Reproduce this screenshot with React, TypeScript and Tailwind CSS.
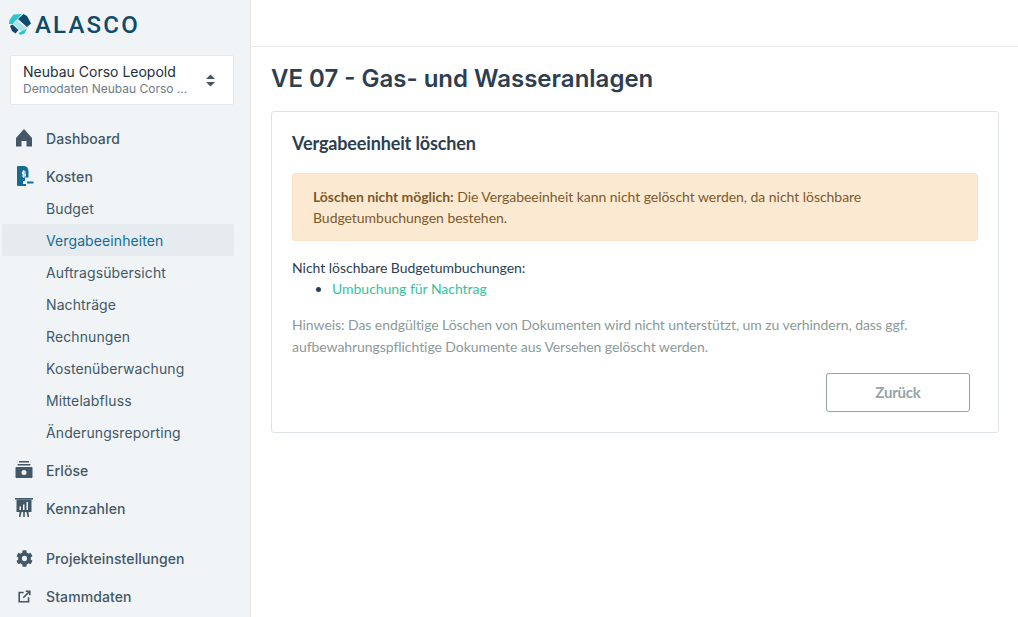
import type { ReactNode } from "react";

const subItems = [
  "Budget",
  "Vergabeeinheiten",
  "Auftragsübersicht",
  "Nachträge",
  "Rechnungen",
  "Kostenüberwachung",
  "Mittelabfluss",
  "Änderungsreporting",
];

function Logo() {
  return (
    <svg width="22" height="22" viewBox="0 0 22 22" className="shrink-0">
      <path d="M4.500 1.500 L13 1 L3.500 11 L0 11 L0.500 7 Z" fill="#2cc5d2" />
      <path d="M14.500 1 L18 3 L22 10.500 L18 14 L9 6 Z" fill="#0f4a6b" />
      <path d="M8 7 L17 15 L13 19 L4 11 Z" fill="#a5e6e4" />
      <path d="M1 13 L3.500 11.500 L9.500 17 L6.500 20.500 L3 18 Z" fill="#0f4a6b" />
      <path d="M9.500 20 L18 15.500 L15.500 20.500 L11 22 Z" fill="#2cc5d2" />
    </svg>
  );
}

function HomeIcon() {
  return (
    <svg width="18" height="18" viewBox="0 0 18 18" fill="#435766">
      <path d="M9 0 L17 9 V17.500 H11.500 V12 H6.500 V17.500 H1 V9 Z" />
    </svg>
  );
}

function CostIcon() {
  return (
    <svg width="19" height="20" viewBox="0 0 19 20">
      <path d="M2 1 A1 1 0 0 1 3 0 H9 C12 0 13.500 2 13.500 6 V11.500 H10 V15 H8 V18 H11 V20 H3 A1 1 0 0 1 2 19 Z" fill="#146c94" />
      <path d="M8.800 4 V12 M11 6 H7.500 V8 H10.300 V10 H6.800" stroke="#f0f4f7" strokeWidth="1.200" fill="none" />
      <rect x="12" y="15.500" width="6.500" height="2" fill="#146c94" />
    </svg>
  );
}

function RevenueIcon() {
  return (
    <svg width="18" height="18" viewBox="0 0 18 18" fill="#435766">
      <rect x="4" y="0" width="10" height="1.500" rx="0.500" />
      <rect x="2.500" y="3" width="13" height="1.500" rx="0.500" />
      <path fillRule="evenodd" d="M1.500 6 H16.500 A1 1 0 0 1 17.500 7 V16 A1 1 0 0 1 16.500 17 H1.500 A1 1 0 0 1 0.500 16 V7 A1 1 0 0 1 1.500 6 Z M9 9 A2.500 2.500 0 1 0 9 14 A2.500 2.500 0 1 0 9 9 Z" />
    </svg>
  );
}

function PresentationIcon() {
  return (
    <svg width="18" height="20" viewBox="0 0 18 20" fill="#435766">
      <rect x="0" y="0" width="18" height="1.500" />
      <path fillRule="evenodd" d="M1.500 1.500 H16.500 V14 H1.500 Z M4.500 8.500 V12 H6 V8.500 Z M8 6.500 V12 H9.500 V6.500 Z M11.500 4 V12 H13 V4 Z" />
      <path d="M4.500 14 H6.500 L5.500 19 H4 Z M8.200 14 H9.800 V19 H8.200 Z M11.500 14 H13.500 L14 19 H12.500 Z" />
    </svg>
  );
}

function GearIcon() {
  return (
    <svg width="17" height="17" viewBox="0 0 512 512" fill="#435766" className="ml-[1px]">
      <path d="M487.400 315.700l-42.600-24.600c4.300-23.200 4.300-47 0-70.200l42.600-24.600c4.900-2.800 7.100-8.600 5.500-14-11.100-35.600-30-67.800-54.700-94.600-3.800-4.100-10-5.100-14.800-2.300L380.800 110c-17.900-15.400-38.500-27.300-60.800-35.100V25.800c0-5.600-3.900-10.500-9.400-11.700-36.700-8.200-74.300-7.800-109.200 0-5.500 1.200-9.400 6.100-9.400 11.700V75c-22.200 7.900-42.800 19.800-60.800 35.100L88.700 85.500c-4.900-2.800-11-1.900-14.800 2.300-24.700 26.700-43.600 58.900-54.700 94.600-1.700 5.400.6 11.200 5.500 14L67.300 221c-4.300 23.200-4.300 47 0 70.200l-42.600 24.600c-4.900 2.800-7.100 8.600-5.500 14 11.100 35.600 30 67.800 54.700 94.600 3.800 4.100 10 5.100 14.800 2.300l42.600-24.600c17.900 15.400 38.500 27.300 60.800 35.100v49.200c0 5.600 3.900 10.500 9.400 11.700 36.700 8.200 74.300 7.800 109.200 0 5.500-1.200 9.400-6.100 9.400-11.700v-49.200c22.200-7.900 42.800-19.800 60.800-35.100l42.600 24.600c4.900 2.800 11 1.900 14.800-2.300 24.700-26.700 43.600-58.900 54.700-94.600 1.500-5.500-.7-11.300-5.600-14.100zM256 336c-44.100 0-80-35.900-80-80s35.900-80 80-80 80 35.900 80 80-35.900 80-80 80z" />
    </svg>
  );
}

function ExternalIcon() {
  return (
    <svg width="13" height="13" viewBox="0 0 16 16" fill="none" stroke="#435766" strokeWidth="2" className="ml-[3px]">
      <path d="M7 3 H1.500 V14.500 H13 V9" />
      <path d="M6.500 9.500 L14 2 M9.500 1.500 H14.500 V6.500" />
    </svg>
  );
}

function NavItem({ icon, label, className }: { icon: ReactNode; label: string; className: string }) {
  return (
    <div className={`flex items-center h-8 ${className}`}>
      <div className="w-[46px] pl-[15px] flex items-center">{icon}</div>
      <span className="text-[14px] font-medium tracking-[0.1px] text-[#435766]">{label}</span>
    </div>
  );
}

export default function App() {
  return (
    <div className="flex h-[617px] w-[1018px] overflow-hidden bg-white font-['Inter',sans-serif]">
      <aside className="w-[251px] shrink-0 bg-[#f0f4f7] border-r border-[#e3e8ec] flex flex-col">
        <div className="flex items-start gap-[4px] pl-[9px] pt-[13px] h-[55px]">
          <Logo />
          <span className="text-[24px] leading-[25px] font-medium tracking-[2.200px] text-[#0f4a6b] font-['Roboto',sans-serif]">ALASCO</span>
        </div>

        <div className="mx-[10px] w-[224px] h-[50px] bg-white border border-[#e3e8ec] rounded-[2px] flex items-center justify-between pl-[12px] pr-[18px]">
          <div className="flex flex-col">
            <span className="text-[14px] leading-[18px] text-[#22303c]">Neubau Corso Leopold</span>
            <span className="text-[12px] leading-[16px] text-[#6b7c88]">Demodaten Neubau Corso ...</span>
          </div>
          <svg width="9" height="13" viewBox="0 0 9 13" fill="#435766">
            <path d="M4.500 0.500 L9 5 H0 Z" />
            <path d="M0 8 H9 L4.500 12.500 Z" />
          </svg>
        </div>

        <NavItem icon={<HomeIcon />} label="Dashboard" className="mt-[17px]" />
        <NavItem icon={<CostIcon />} label="Kosten" className="mt-[6px]" />

        <div className="flex flex-col">
          {subItems.map((item) => (
            <div
              key={item}
              className={`h-8 ml-[2px] w-[232px] pl-[44px] flex items-center text-[14px] tracking-[0.1px] rounded-[2px] ${
                item === "Vergabeeinheiten" ? "bg-[#e5ebef] text-[#146c94]" : "text-[#435766]"
              }`}
            >
              {item}
            </div>
          ))}
        </div>

        <NavItem icon={<RevenueIcon />} label="Erlöse" className="mt-[6px]" />
        <NavItem icon={<PresentationIcon />} label="Kennzahlen" className="mt-[6px]" />
        <NavItem icon={<GearIcon />} label="Projekteinstellungen" className="mt-[18px]" />
        <NavItem icon={<ExternalIcon />} label="Stammdaten" className="mt-[6px]" />
      </aside>

      <main className="flex-1 flex flex-col min-w-0">
        <div className="h-[47px] border-b border-[#e6eaed] shrink-0" />
        <div className="pl-[20px] pr-[19px]">
          <h1 className="mt-[16px] text-[24px] leading-[32px] font-semibold text-[#2c3e50]">VE 07 - Gas- und Wasseranlagen</h1>

          <section className="mt-[16px] border border-[#dfe4e8] rounded-[3px] h-[322px] px-[20px] pt-[20px] font-['Lato',sans-serif]">
            <h2 className="text-[18px] leading-[22px] font-bold tracking-[-0.14px] text-[#2c3e50]">Vergabeeinheit löschen</h2>

            <div className="mt-[19px] h-[68px] bg-[#fce9d2] border border-[#fbe3c5] rounded-[3px] px-[20px] py-[12px] text-[14px] leading-[21px] tracking-[-0.04px] text-[#7c5a2a]">
              <strong className="font-bold">Löschen nicht möglich:</strong> Die Vergabeeinheit kann nicht gelöscht werden, da nicht löschbare Budgetumbuchungen bestehen.
            </div>

            <p className="mt-[16px] text-[14px] leading-[21px] tracking-[-0.03px] text-[#2c3e50]">Nicht löschbare Budgetumbuchungen:</p>
            <ul className="list-disc pl-[40px] text-[14px] leading-[21px] tracking-[-0.03px] text-[#2c3e50]">
              <li>
                <a className="text-[#34c3a2]">Umbuchung für Nachtrag</a>
              </li>
            </ul>

            <p className="mt-[15px] text-[14px] leading-[22px] tracking-[-0.06px] text-[#8a9a9b]">
              Hinweis: Das endgültige Löschen von Dokumenten wird nicht unterstützt, um zu verhindern, dass ggf. aufbewahrungspflichtige Dokumente aus Versehen gelöscht werden.
            </p>

            <div className="flex justify-end mt-[15px] pr-[8px]">
              <button className="w-[144px] h-[39px] border border-[#95a5a6] rounded-[3px] text-[15px] font-bold tracking-[-0.2px] text-[#95a5a6] bg-white">Zurück</button>
            </div>
          </section>
        </div>
      </main>
    </div>
  );
}
